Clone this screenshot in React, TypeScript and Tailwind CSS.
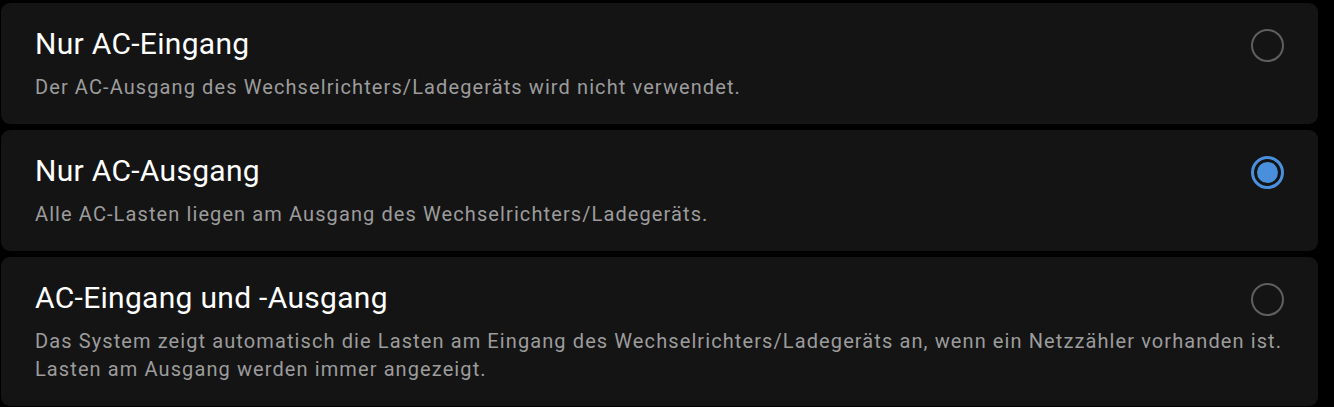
const options = [
    {
        title: "Nur AC-Eingang",
        description: "Der AC-Ausgang des Wechselrichters/Ladegeräts wird nicht verwendet.",
        selected: false,
    },
    {
        title: "Nur AC-Ausgang",
        description: "Alle AC-Lasten liegen am Ausgang des Wechselrichters/Ladegeräts.",
        selected: true,
    },
    {
        title: "AC-Eingang und -Ausgang",
        description:
            "Das System zeigt automatisch die Lasten am Eingang des Wechselrichters/Ladegeräts an, wenn ein Netzzähler vorhanden ist. Lasten am Ausgang werden immer angezeigt.",
        selected: false,
    },
];

function Radio({ checked }: { checked: boolean }) {
    if (checked) {
        return (
            <div className="w-[33px] h-[33px] rounded-full border-[3px] border-[#4a8fdc] flex items-center justify-center shrink-0">
                <div className="w-[21px] h-[21px] rounded-full bg-[#4a8fdc]" />
            </div>
        );
    }
    return <div className="w-[33px] h-[33px] rounded-full border-2 border-[#5f5f5f] shrink-0" />;
}

export default function App() {
    return (
        <div className="w-[1334px] h-[407px] bg-black pt-[3px] pl-[1px] pr-[16px] flex flex-col gap-[6px] font-['Roboto',sans-serif]">
            {options.map((opt, idx) => (
                <div key={idx} className="bg-[#141414] rounded-[9px] pl-[34px] pr-[34px] pt-[23px] pb-[23px]">
                    <div className="flex items-start justify-between">
                        <h3 className="text-white text-[30px] leading-[36px] tracking-[0.3px]">{opt.title}</h3>
                        <div className="pt-[3px]">
                            <Radio checked={opt.selected} />
                        </div>
                    </div>
                    <p className="text-[#9c9c9c] text-[20px] leading-[28px] tracking-[1.1px] mt-[11px] -mr-[24px]">
                        {opt.description}
                    </p>
                </div>
            ))}
        </div>
    );
}
